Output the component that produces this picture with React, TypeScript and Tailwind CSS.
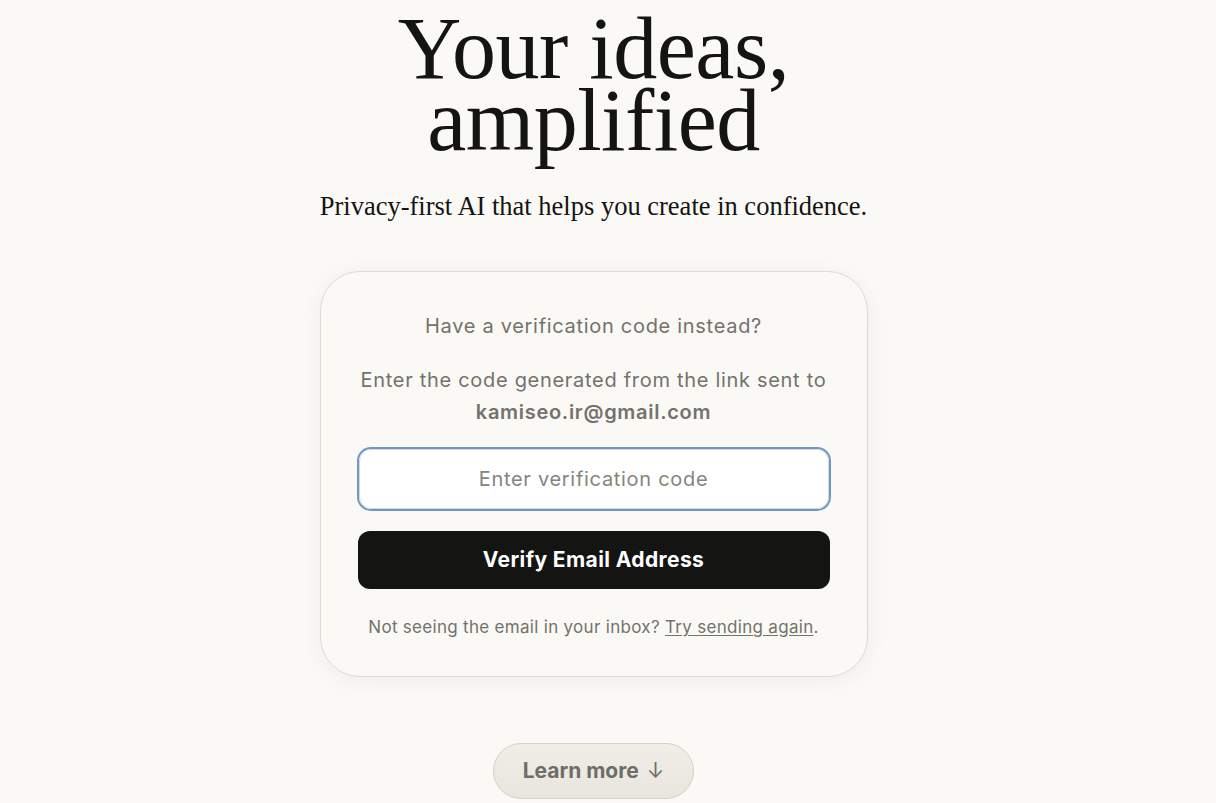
export default function App() {
  return (
    <div className="min-h-screen bg-[#faf9f5] flex flex-col items-center pt-[13px] pr-[29px] font-['Inter','Liberation_Sans',sans-serif]">
      {/* headline */}
      <h1 className="font-['Liberation_Serif',serif] text-[88px] leading-[72px] text-[#141413] text-center tracking-[-0.5px]">
        Your ideas,
        <br />
        amplified
      </h1>
      <p className="mt-[33px] font-['Liberation_Serif',serif] text-[26.5px] leading-8 text-[#141413]">
        Privacy-first AI that helps you create in confidence.
      </p>

      {/* verification card */}
      <div className="mt-[49px] w-[548px] rounded-[40px] border border-[#dedbd2] bg-[#faf9f5] px-[36px] pt-[40px] pb-[37px] shadow-[0_4px_24px_rgba(0,0,0,0.05)] flex flex-col items-center text-center text-[#73726c] tracking-[0.7px]">
        <p className="text-[20px] leading-7">Have a verification code instead?</p>
        <p className="mt-6 text-[20px] leading-8">
          Enter the code generated from the link sent to
          <br />
          <span className="font-semibold">kamiseo.ir@gmail.com</span>
        </p>

        <div className="mt-[19px] w-full rounded-[14px] border-2 border-[#6a98cc]">
          <input
            className="w-full h-[60px] rounded-[12px] border border-[#d9d7d0] bg-white text-center text-[20px] tracking-[0.7px] text-[#141413] placeholder:text-[#86847d] outline-none"
            placeholder="Enter verification code"
          />
        </div>

        <button className="mt-[20px] w-[472px] h-[58px] rounded-[12px] bg-[#141413] text-white text-[21px] font-bold tracking-[0.4px]">
          Verify Email Address
        </button>

        <p className="mt-[26px] text-[17px] leading-6 tracking-[0.3px]">
          Not seeing the email in your inbox?{" "}
          <a href="#" className="underline underline-offset-2">
            Try sending again
          </a>
          .
        </p>
      </div>

      {/* learn more */}
      <button className="mt-[66px] h-[56px] px-[29px] rounded-full border border-[#d3d0c5] bg-gradient-to-b from-[#f0eee7] to-[#e7e5dc] text-[21px] font-bold text-[#6e6d68] flex items-center gap-2">
        Learn more <span className="font-normal">↓</span>
      </button>
    </div>
  );
}
